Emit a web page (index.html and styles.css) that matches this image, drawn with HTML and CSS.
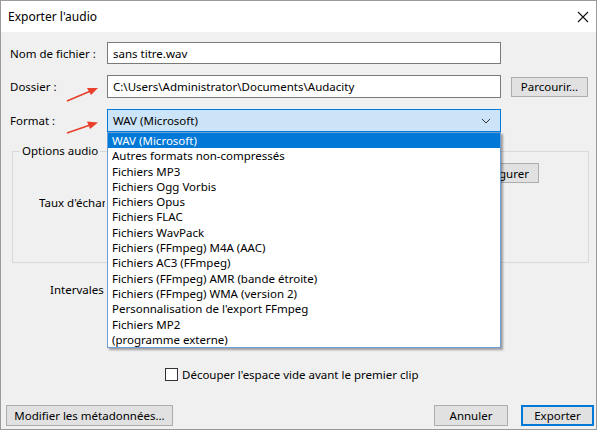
FILE: index.html
```html
<!DOCTYPE html>
<html lang="fr">
<head>
<meta charset="utf-8">
<title>Exporter l'audio</title>
<link rel="stylesheet" href="styles.css">
</head>
<body>
<div class="window">
  <div class="titlebar">
    <span class="title">Exporter l'audio</span>
    <svg class="close" width="12" height="12" viewBox="0 0 12 12"><path d="M1 1 L11 11 M11 1 L1 11" stroke="#111" stroke-width="1.1" fill="none"/></svg>
  </div>
  <div class="content">
    <div class="row r1">
      <span class="label">Nom de fichier :</span>
      <div class="input">sans titre.wav</div>
    </div>
    <div class="row r2">
      <span class="label">Dossier :</span>
      <div class="input">C:\Users\Administrator\Documents\Audacity</div>
      <button class="btn browse">Parcourir...</button>
    </div>
    <div class="row r3">
      <span class="label">Format :</span>
      <div class="select">
        <span>WAV (Microsoft)</span>
        <svg class="chev" width="10" height="6" viewBox="0 0 10 6"><path d="M1 1 L5 5 L9 1" stroke="#333" stroke-width="1" fill="none"/></svg>
        <ul class="dropdown">
          <li class="sel">WAV (Microsoft)</li>
          <li>Autres formats non-compressés</li>
          <li>Fichiers MP3</li>
          <li>Fichiers Ogg Vorbis</li>
          <li>Fichiers Opus</li>
          <li>Fichiers FLAC</li>
          <li>Fichiers WavPack</li>
          <li>Fichiers (FFmpeg) M4A (AAC)</li>
          <li>Fichiers AC3 (FFmpeg)</li>
          <li>Fichiers (FFmpeg) AMR (bande étroite)</li>
          <li>Fichiers (FFmpeg) WMA (version 2)</li>
          <li>Personnalisation de l'export FFmpeg</li>
          <li>Fichiers MP2</li>
          <li>(programme externe)</li>
        </ul>
      </div>
    </div>
    <div class="group">
      <span class="legend">Options audio</span>
      <div class="group-top">
        <button class="btn config"><span class="config-text">Configurer</span></button>
      </div>
      <div class="group-rate"><span class="clip">Taux d'échantillonnage :</span></div>
    </div>
    <div class="intervals"><span class="clip">Intervales de temps :</span></div>
    <label class="check-row">
      <span class="checkbox"></span>
      <span>Découper l'espace vide avant le premier clip</span>
    </label>
    <div class="footer">
      <button class="btn meta">Modifier les métadonnées...</button>
      <div class="footer-right">
        <button class="btn cancel">Annuler</button>
        <button class="btn export">Exporter</button>
      </div>
    </div>
  </div>
  <svg class="arrow a1" width="34" height="18" viewBox="0 0 34 18"><path d="M1 16 L27 5" stroke="#e8402a" stroke-width="1.7" fill="none"/><polygon points="32,3 21,3 25,10" fill="#e8402a"/></svg>
  <svg class="arrow a2" width="34" height="18" viewBox="0 0 34 18"><path d="M1 14 L27 5" stroke="#e8402a" stroke-width="1.7" fill="none"/><polygon points="32,3.5 21,2.5 24,10" fill="#e8402a"/></svg>
</div>
</body>
</html>
```
FILE: styles.css
```css
html, body {
  margin: 0;
  padding: 0;
  background: #ffffff;
}
body {
  width: 600px;
  height: 432px;
  overflow: hidden;
  font-family: "Noto Sans", "DejaVu Sans", sans-serif;
  font-size: 11.5px;
  color: #000;
}
.window {
  position: relative;
  width: 595px;
  height: 428px;
  border: 1px solid #9a9a9a;
  background: #f0f0f0;
  display: flex;
  flex-direction: column;
}
.titlebar {
  height: 31px;
  background: #ffffff;
  display: flex;
  align-items: center;
  justify-content: space-between;
  padding: 0 7px 0 7px;
}
.title {
  font-size: 12px;
}
.content {
  flex: 1;
  display: flex;
  flex-direction: column;
  padding: 10px 0 0 0;
}
.row {
  display: flex;
  align-items: center;
  padding-left: 9px;
}
.r1 { height: 22px; }
.r2 { height: 23px; margin-top: 11px; }
.r3 { height: 23px; margin-top: 11px; }
.label {
  width: 97px;
  flex: none;
}
.input {
  box-sizing: border-box;
  width: 394px;
  height: 100%;
  border: 1px solid #7a7a7a;
  background: #fff;
  padding: 0 5px;
  display: flex;
  align-items: center;
}
.btn {
  box-sizing: border-box;
  font-family: inherit;
  font-size: 11.5px;
  color: #000;
  background: #e1e1e1;
  border: 1px solid #adadad;
  padding: 0;
  height: 21px;
}
.browse {
  width: 77px;
  margin-left: 10px;
  height: 20px;
}
.select {
  position: relative;
  box-sizing: border-box;
  width: 394px;
  height: 100%;
  border: 1px solid #0078d7;
  background: #cce4f7;
  padding: 0 5px;
  display: flex;
  align-items: center;
  justify-content: space-between;
}
.chev {
  margin-right: 4px;
}
.dropdown {
  position: absolute;
  left: -1px;
  top: 22px;
  width: 394px;
  box-sizing: border-box;
  margin: 0;
  padding: 0;
  list-style: none;
  background: #fff;
  border: 1px solid #6e9fd6;
  box-shadow: 2px 2px 2px rgba(0,0,0,0.35);
  z-index: 5;
}
.dropdown li {
  height: 15.3px;
  line-height: 15px;
  padding-left: 4px;
}
.dropdown li.sel {
  background: #0078d7;
  color: #fff;
}
.group {
  position: relative;
  margin: 19px 7px 0 11px;
  height: 110px;
  border: 1px solid #d9d9d9;
}
.legend {
  position: absolute;
  left: 7px;
  top: -9px;
  background: #f0f0f0;
  padding: 0 2px;
}
.group-top {
  display: flex;
  justify-content: flex-end;
  padding: 11px 49px 0 0;
}
.config {
  width: 80px;
  height: 20px;
  display: flex;
  justify-content: flex-end;
  align-items: center;
  overflow: hidden;
}
.config-text {
  margin-right: 9px;
  white-space: nowrap;
}
.clip {
  display: block;
  overflow: hidden;
  white-space: nowrap;
}
.group-rate {
  margin: 12px 0 0 26px;
}
.group-rate .clip {
  width: 66px;
}
.intervals {
  margin: 19px 0 0 49px;
  line-height: 15px;
}
.intervals .clip {
  width: 55px;
}
.check-row {
  display: flex;
  align-items: center;
  margin: 70px 0 0 164px;
  height: 15px;
}
.checkbox {
  box-sizing: border-box;
  width: 13px;
  height: 13px;
  border: 1px solid #333;
  background: #fff;
  margin-right: 4px;
}
.footer {
  display: flex;
  justify-content: space-between;
  margin: 23px 2px 0 5px;
}
.meta {
  width: 167px;
}
.footer-right {
  display: flex;
  gap: 13px;
}
.cancel {
  width: 74px;
}
.export {
  width: 73px;
  border: 2px solid #0078d7;
}
.arrow {
  position: absolute;
}
.a1 { left: 65px; top: 84px; }
.a2 { left: 65px; top: 118px; }
```
